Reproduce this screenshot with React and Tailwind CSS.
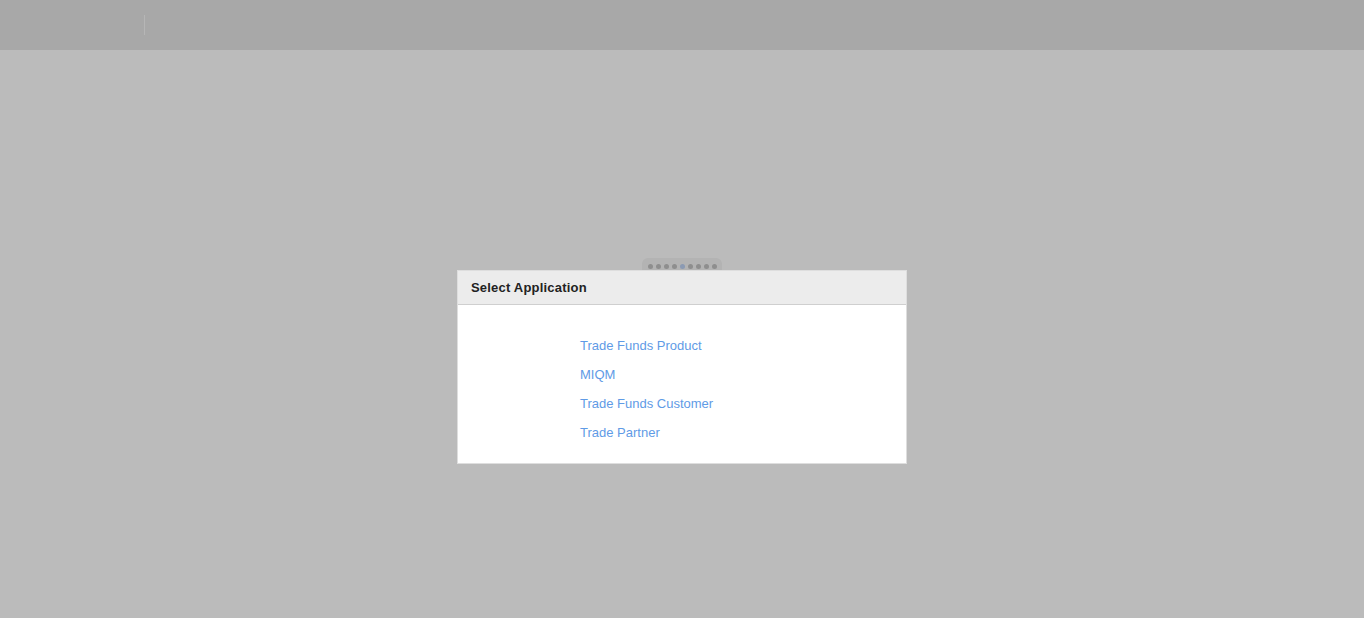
const APPS = ['Trade Funds Product', 'MIQM', 'Trade Funds Customer', 'Trade Partner']

export default function App() {
  return (
    <div className="flex h-[618px] w-full flex-col bg-[#bbbbbb] font-['Liberation_Sans',Arial,sans-serif]">
      <div className="flex h-[50px] shrink-0 items-center bg-[#a8a8a8]">
        <div className="ml-[144px] h-[20px] w-px bg-[#b6b6b6]" />
      </div>
      <div className="flex flex-1 flex-col items-center pt-[208px]">
        <div className="flex h-[12px] w-[80px] items-start gap-[3px] rounded-t-[6px] bg-[#b3b3b3] pl-[6px] pt-[6px]">
          {Array.from({ length: 9 }).map((_, i) => (
            <span
              key={i}
              className={`h-[5px] w-[5px] rounded-full ${i === 4 ? 'bg-[#8b9ab3]' : 'bg-[#8e8e8e]'}`}
            />
          ))}
        </div>
        <div className="w-[450px] border border-[#dedede] bg-white">
          <div className="flex h-[34px] items-center border-b border-[#cfcfcf] bg-[#ececec] pl-[13px] pt-[1px] text-[13px] font-bold tracking-[0.2px] text-[#222222]">
            Select Application
          </div>
          <ul className="pb-[16px] pl-[122px] pt-[26px] text-[13px] leading-[29px] text-[#5f9be6]">
            {APPS.map(a => (
              <li key={a}>
                <a href="#" className="cursor-pointer">{a}</a>
              </li>
            ))}
          </ul>
        </div>
      </div>
    </div>
  )
}
